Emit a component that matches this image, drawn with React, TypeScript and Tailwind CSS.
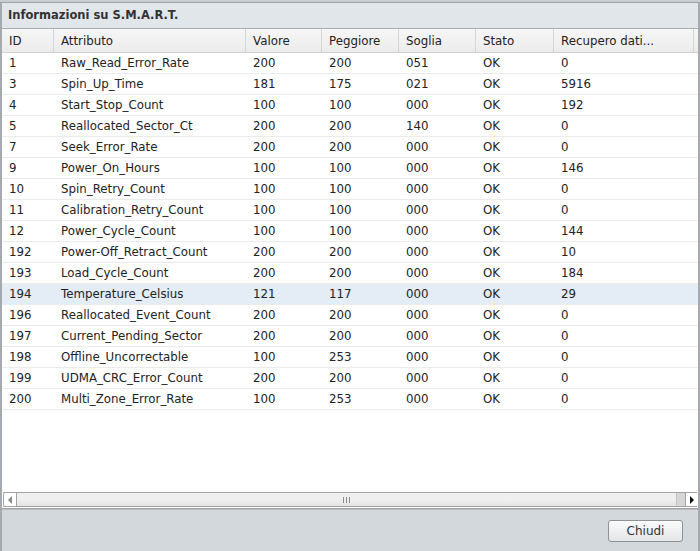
import React from 'react';

type SmartRow = {
  id: string;
  attr: string;
  value: string;
  worst: string;
  thresh: string;
  status: string;
  raw: string;
};

const rows: SmartRow[] = [
  { id: '1', attr: 'Raw_Read_Error_Rate', value: '200', worst: '200', thresh: '051', status: 'OK', raw: '0' },
  { id: '3', attr: 'Spin_Up_Time', value: '181', worst: '175', thresh: '021', status: 'OK', raw: '5916' },
  { id: '4', attr: 'Start_Stop_Count', value: '100', worst: '100', thresh: '000', status: 'OK', raw: '192' },
  { id: '5', attr: 'Reallocated_Sector_Ct', value: '200', worst: '200', thresh: '140', status: 'OK', raw: '0' },
  { id: '7', attr: 'Seek_Error_Rate', value: '200', worst: '200', thresh: '000', status: 'OK', raw: '0' },
  { id: '9', attr: 'Power_On_Hours', value: '100', worst: '100', thresh: '000', status: 'OK', raw: '146' },
  { id: '10', attr: 'Spin_Retry_Count', value: '100', worst: '100', thresh: '000', status: 'OK', raw: '0' },
  { id: '11', attr: 'Calibration_Retry_Count', value: '100', worst: '100', thresh: '000', status: 'OK', raw: '0' },
  { id: '12', attr: 'Power_Cycle_Count', value: '100', worst: '100', thresh: '000', status: 'OK', raw: '144' },
  { id: '192', attr: 'Power-Off_Retract_Count', value: '200', worst: '200', thresh: '000', status: 'OK', raw: '10' },
  { id: '193', attr: 'Load_Cycle_Count', value: '200', worst: '200', thresh: '000', status: 'OK', raw: '184' },
  { id: '194', attr: 'Temperature_Celsius', value: '121', worst: '117', thresh: '000', status: 'OK', raw: '29' },
  { id: '196', attr: 'Reallocated_Event_Count', value: '200', worst: '200', thresh: '000', status: 'OK', raw: '0' },
  { id: '197', attr: 'Current_Pending_Sector', value: '200', worst: '200', thresh: '000', status: 'OK', raw: '0' },
  { id: '198', attr: 'Offline_Uncorrectable', value: '100', worst: '253', thresh: '000', status: 'OK', raw: '0' },
  { id: '199', attr: 'UDMA_CRC_Error_Count', value: '200', worst: '200', thresh: '000', status: 'OK', raw: '0' },
  { id: '200', attr: 'Multi_Zone_Error_Rate', value: '100', worst: '253', thresh: '000', status: 'OK', raw: '0' },
];

const headers = ['ID', 'Attributo', 'Valore', 'Peggiore', 'Soglia', 'Stato', 'Recupero dati...'];

const cols = 'grid grid-cols-[52px_192px_76px_77px_77px_78px_140px]';

export default function App() {
  const selected = '194';

  return (
    <div
      className="w-[700px] h-[551px] flex flex-col bg-[#d0d4d8] overflow-hidden text-[11.8px] text-[#222]"
      style={{ fontFamily: '"DejaVu Sans", Verdana, sans-serif' }}
    >
      {/* page behind the dialog */}
      <div className="h-[2px] shrink-0 bg-[#c9cdd1]" />

      <div className="flex-1 flex flex-col border-t border-x-2 border-[#a6aaae] border-t-[#9ea2a6]">
        {/* title bar */}
        <div className="h-[26px] shrink-0 flex items-center px-[6px] pt-[1px] bg-[#e1e6ea] border-b border-[#a9adb1] font-bold text-[11.5px] text-[#333]">
          Informazioni su S.M.A.R.T.
        </div>

        {/* table panel */}
        <div className="flex-1 flex flex-col bg-white border-b border-[#a0a4a8]">
          <div className={`${cols} h-[24px] shrink-0 bg-gradient-to-b from-[#f6f6f6] to-[#ececec] border-b border-[#d0d0d0]`}>
            {headers.map((h) => (
              <div key={h} className="flex items-center pl-[7px] pt-[3px] border-r border-[#d6d6d6] whitespace-nowrap">
                {h}
              </div>
            ))}
          </div>

          <div className="flex-1">
            {rows.map((r) => (
              <div
                key={r.id}
                className={`${cols} h-[21px] border-b border-[#ebebeb] ${r.id === selected ? 'bg-[#e4ecf6]' : ''}`}
              >
                {[r.id, r.attr, r.value, r.worst, r.thresh, r.status, r.raw].map((v, i) => (
                  <div key={i} className="flex items-center pl-[7px] pt-[1px] whitespace-nowrap">
                    {v}
                  </div>
                ))}
              </div>
            ))}
          </div>

          {/* horizontal scrollbar */}
          <div className="h-[15px] shrink-0 flex mx-[1px] mb-[1px] border-y border-[#a3a3a3] bg-[#eeeeee]">
            <div className="w-[14px] flex items-center justify-center bg-white border-x border-[#a3a3a3] rounded-l-[2px]">
              <svg width="5" height="8" viewBox="0 0 5 8">
                <path d="M4 0 L0 4 L4 8 Z" fill="#8a8a8a" />
              </svg>
            </div>
            <div className="flex-1 flex items-center justify-center bg-gradient-to-b from-[#f0f0f0] via-[#efefef] to-[#e4e4e4]">
              <div className="flex gap-[2px]">
                <span className="w-px h-[6px] bg-[#8c8c8c]" />
                <span className="w-px h-[6px] bg-[#8c8c8c]" />
                <span className="w-px h-[6px] bg-[#8c8c8c]" />
              </div>
            </div>
            <div className="w-[9px] bg-[#d6d6d6] border-l border-[#c4c4c4]" />
            <div className="w-[12px] flex items-center justify-center bg-white border-l border-[#a3a3a3]">
              <svg width="5" height="8" viewBox="0 0 5 8">
                <path d="M1 0 L5 4 L1 8 Z" fill="#111" />
              </svg>
            </div>
          </div>
        </div>

        {/* footer */}
        <div className="h-[42px] shrink-0 flex items-center justify-end pr-[15px] bg-[#d3d8dc] border-t border-[#b9bdc1]">
          <button className="w-[75px] h-[22px] pt-[1px] rounded-[3px] border border-[#8e9296] bg-gradient-to-b from-[#fbfbfb] to-[#e3e5e7] text-[12px] text-[#333]">
            Chiudi
          </button>
        </div>
      </div>
    </div>
  );
}
